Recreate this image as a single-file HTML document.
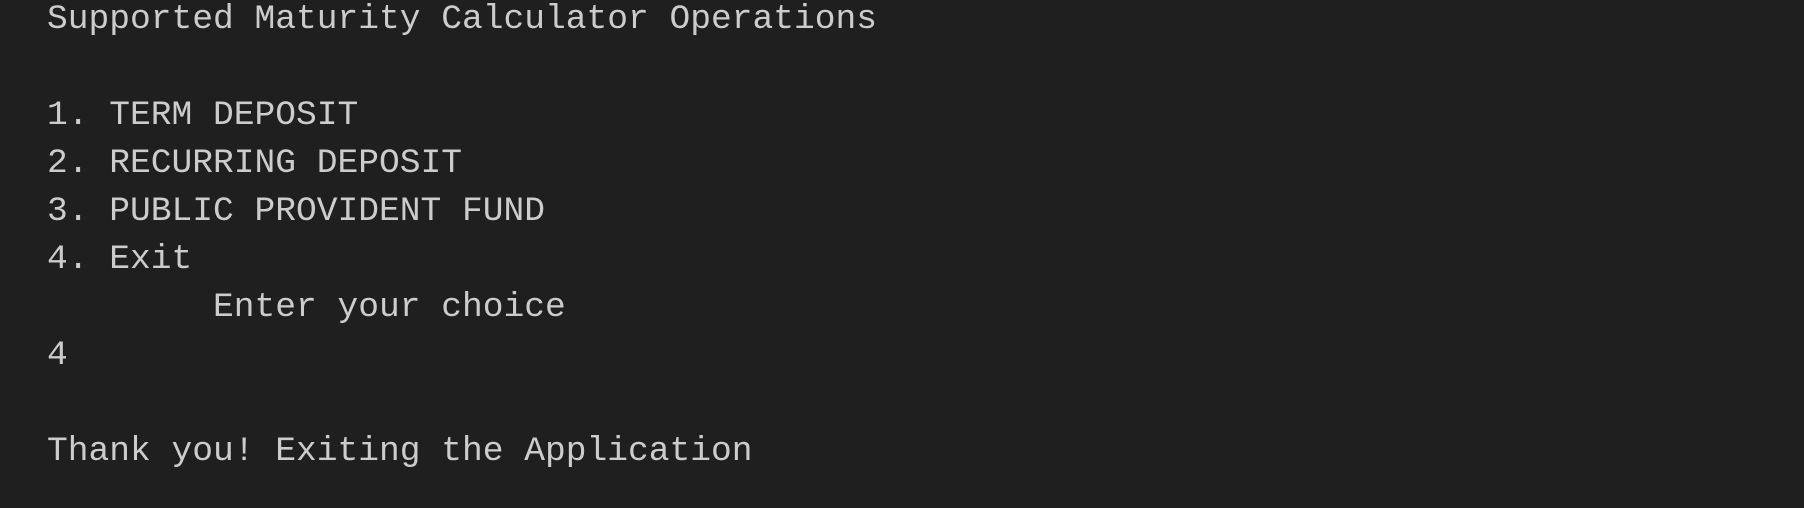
<!DOCTYPE html>
<html><head><meta charset="utf-8"><style>
html,body{margin:0;padding:0;background:#1f1f1f;width:1804px;height:508px;overflow:hidden}
pre{margin:-4px 0 0 47px;font-family:"Liberation Mono",monospace;font-size:34.6px;line-height:48px;color:#cccccc}
</style></head><body><pre>Supported Maturity Calculator Operations

1. TERM DEPOSIT
2. RECURRING DEPOSIT
3. PUBLIC PROVIDENT FUND
4. Exit
        Enter your choice
4

Thank you! Exiting the Application</pre></body></html>
